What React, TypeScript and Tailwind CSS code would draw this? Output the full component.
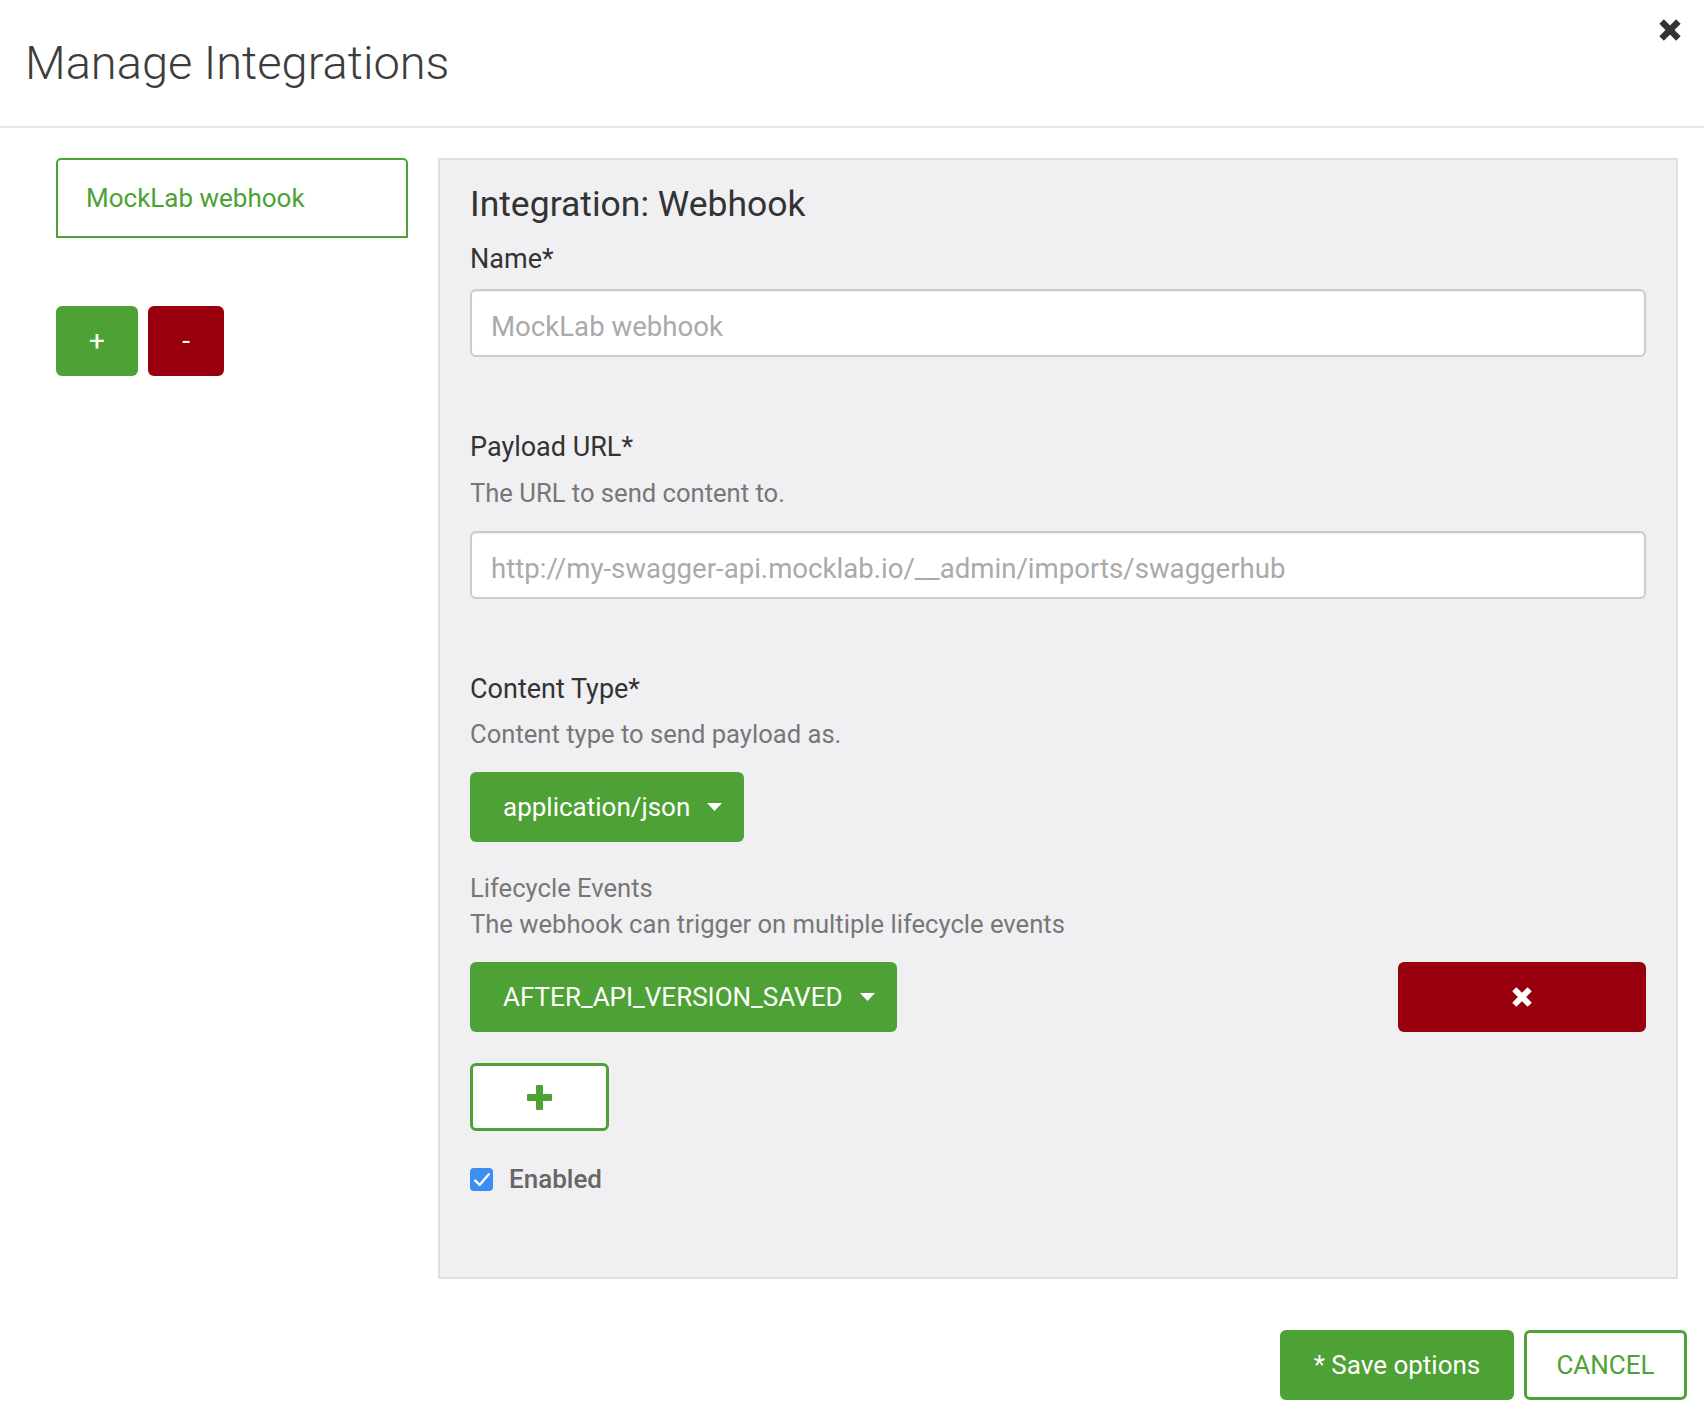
import React from 'react'

function CloseGlyph({ size, className }: { size: number; className?: string }) {
  return (
    <svg width={size} height={size} viewBox="0 0 24 24" className={className} aria-hidden="true">
      <path d="M3.6 3.6 L20.4 20.4 M20.4 3.6 L3.6 20.4" stroke="currentColor" strokeWidth="6.4" strokeLinecap="butt" fill="none" />
    </svg>
  )
}

function Caret() {
  return (
    <svg width="15" height="8" viewBox="0 0 15 8" aria-hidden="true">
      <path d="M0 0 H15 L7.5 8 Z" fill="currentColor" />
    </svg>
  )
}

function DropdownButton({ label }: { label: string }) {
  return (
    <button
      type="button"
      className="flex h-[70px] items-center gap-[17px] rounded-[6px] bg-[#4ea235] pl-[33px] pr-[22px] text-[26px] leading-none text-white"
    >
      <span>{label}</span>
      <Caret />
    </button>
  )
}

function Field({ label, hint, placeholder, first }: { label: string; hint?: string; placeholder: string; first?: boolean }) {
  return (
    <div className={first ? 'mt-[15px]' : 'mt-[72px]'}>
      <label className="block text-[27px] leading-[36px] text-[#333]">{label}</label>
      {hint && <p className="mt-[10px] text-[25.6px] leading-[36px] text-[#777]">{hint}</p>}
      <input
        type="text"
        placeholder={placeholder}
        className={`${hint ? 'mt-[20px]' : 'mt-[12px]'} block h-[68px] w-full rounded-[6px] border-2 border-[#cbcbcb] bg-white px-[19px] pt-[6px] text-[27.6px] text-[#333] shadow-[inset_0_1px_1px_rgba(0,0,0,0.075)] outline-none placeholder:text-[#aaaaaa]`}
      />
    </div>
  )
}

export default function App() {
  return (
    <div className="min-h-[1422px] w-[1704px] bg-white font-[Roboto,sans-serif]">
      <header className="relative h-[128px] border-b-2 border-[#e6e6e6] pl-[25px] pt-[36px]">
        <h1 className="text-[47px] font-light leading-[54px] text-[#3d3d3d]">Manage Integrations</h1>
        <button type="button" title="Close" className="absolute right-[22px] top-[18px] text-[#333]">
          <CloseGlyph size={24} />
        </button>
      </header>

      <div className="flex items-start gap-[30px] pl-[56px] pt-[30px]">
        <aside className="w-[352px] shrink-0">
          <div className="flex h-[80px] items-center rounded-t-[5px] border-2 border-[#4ea235] pl-[28px] text-[26px] text-[#4ea235]">
            MockLab webhook
          </div>
          <div className="mt-[68px] flex gap-[10px]">
            <button type="button" className="flex h-[70px] w-[82px] items-center justify-center rounded-[6px] bg-[#4ea235] text-[28px] text-white">
              +
            </button>
            <button type="button" className="flex h-[70px] w-[76px] items-center justify-center rounded-[6px] bg-[#97000c] text-[28px] text-white">
              -
            </button>
          </div>
        </aside>

        <section className="w-[1240px] border-2 border-[#e0e0e0] bg-[#f0f0f2] px-[30px] pb-[80px] pt-[22px]">
          <h2 className="text-[35.5px] leading-[44px] text-[#333]">Integration: Webhook</h2>

          <Field first label="Name*" placeholder="MockLab webhook" />
          <Field
            label="Payload URL*"
            hint="The URL to send content to."
            placeholder="http://my-swagger-api.mocklab.io/__admin/imports/swaggerhub"
          />

          <div className="mt-[72px]">
            <label className="block text-[27px] leading-[36px] text-[#333]">Content Type*</label>
            <p className="mt-[9px] text-[25.6px] leading-[36px] text-[#777]">Content type to send payload as.</p>
            <div className="mt-[20px] flex">
              <DropdownButton label="application/json" />
            </div>
          </div>

          <div className="mt-[28px] text-[25.6px] leading-[36px] text-[#777]">
            <p>Lifecycle Events</p>
            <p>The webhook can trigger on multiple lifecycle events</p>
          </div>

          <div className="mt-[20px] flex items-center justify-between">
            <DropdownButton label="AFTER_API_VERSION_SAVED" />
            <button type="button" className="flex h-[70px] w-[248px] items-center justify-center rounded-[6px] bg-[#97000c] text-white">
              <CloseGlyph size={22} />
            </button>
          </div>

          <button
            type="button"
            className="mt-[31px] flex h-[68px] w-[139px] items-center justify-center rounded-[6px] border-[3px] border-[#4ea235] bg-white text-[#4ea235]"
          >
            <svg width="25" height="25" viewBox="0 0 25 25" aria-hidden="true">
              <rect x="9" y="0" width="7" height="25" rx="1" fill="currentColor" />
              <rect x="0" y="9" width="25" height="7" rx="1" fill="currentColor" />
            </svg>
          </button>

          <label className="mt-[30px] flex h-[36px] items-center gap-[16px]">
            <span className="flex h-[23px] w-[23px] items-center justify-center rounded-[4px] bg-[#3b8ef3]">
              <svg width="23" height="23" viewBox="0 0 23 23" aria-hidden="true">
                <path d="M5.2 12.6 L9.8 16.8 L18.8 6.2" stroke="white" strokeWidth="2.4" fill="none" strokeLinecap="round" strokeLinejoin="round" />
              </svg>
            </span>
            <span className="text-[26px] font-medium text-[#666]">Enabled</span>
          </label>
        </section>
      </div>

      <footer className="mt-[51px] flex justify-end gap-[10px] pr-[17px]">
        <button type="button" className="h-[70px] w-[234px] rounded-[6px] bg-[#4ea235] text-[26px] text-white">
          * Save options
        </button>
        <button type="button" className="h-[70px] w-[163px] rounded-[6px] border-[3px] border-[#4ea235] bg-white text-[26px] text-[#4ea235]">
          CANCEL
        </button>
      </footer>
    </div>
  )
}
